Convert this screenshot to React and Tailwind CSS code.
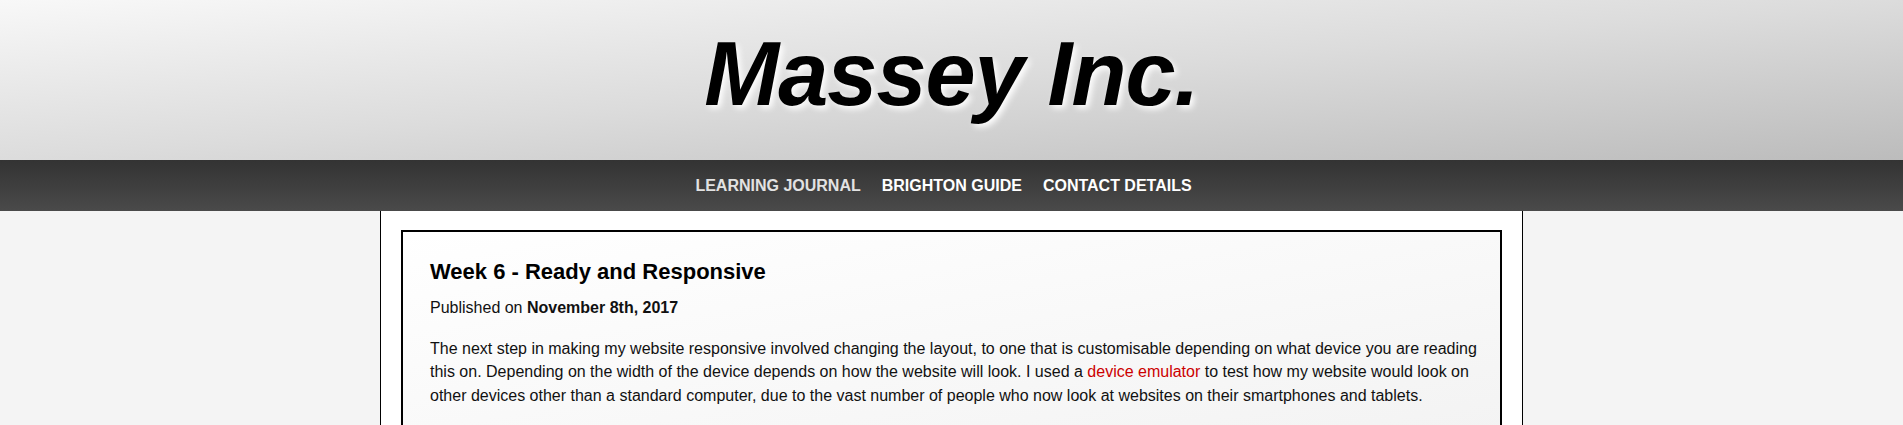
import React from 'react';

const navLinks = [
  { label: 'Learning Journal', active: true },
  { label: 'Brighton Guide' },
  { label: 'Contact Details' },
];

const App = () => {
  return (
    <div className="min-h-screen bg-[#f4f4f4] font-['Liberation_Sans',Arial,sans-serif] text-[#111]">
      {/* Header */}
      <header className="h-[160px] bg-linear-to-br from-[#f8f8f8] via-[#dcdcdc] to-[#bcbcbc] pt-[23px] text-center">
        <h1 className="text-[90px] font-bold italic leading-[normal] tracking-[-1px] text-black [text-shadow:3px_3px_6px_#ffffff]">
          Massey Inc.
        </h1>
      </header>

      {/* Nav */}
      <nav className="h-[51px] bg-linear-to-b from-[#333333] to-[#4a4a4a] flex items-center justify-center gap-[5px]">
        {navLinks.map(link => (
          <a
            key={link.label}
            href="#"
            className={`mr-4 text-[16px] font-bold uppercase ${link.active ? 'text-[#e2e2e2]' : 'text-white'}`}
          >
            {link.label}
          </a>
        ))}
      </nav>

      {/* Content column */}
      <main className="w-[1143px] mx-auto bg-white border-x border-black pt-[19px] px-[20px] pb-[20px]">
        <article className="border-2 border-black bg-linear-to-br from-white to-[#f3f3f3] pt-[27px] pb-[27px] pl-[27px] pr-[18px]">
          <h2 className="text-[22px] font-bold leading-[normal] text-black">Week 6 - Ready and Responsive</h2>
          <p className="mt-[14px] text-[16px] leading-[normal]">
            Published on <strong className="font-bold">November 8th, 2017</strong>
          </p>
          <p className="mt-[20px] text-[16px] leading-[23.3px]">
            The next step in making my website responsive involved changing the layout, to one that is customisable depending on what device you are reading this on. Depending on the width of the device depends on how the website will look. I used a{' '}
            <a href="#" className="text-[#cc0000]">device emulator</a>{' '}
            to test how my website would look on other devices other than a standard computer, due to the vast number of people who now look at websites on their smartphones and tablets.
          </p>
        </article>
      </main>
    </div>
  );
};

export default App;
